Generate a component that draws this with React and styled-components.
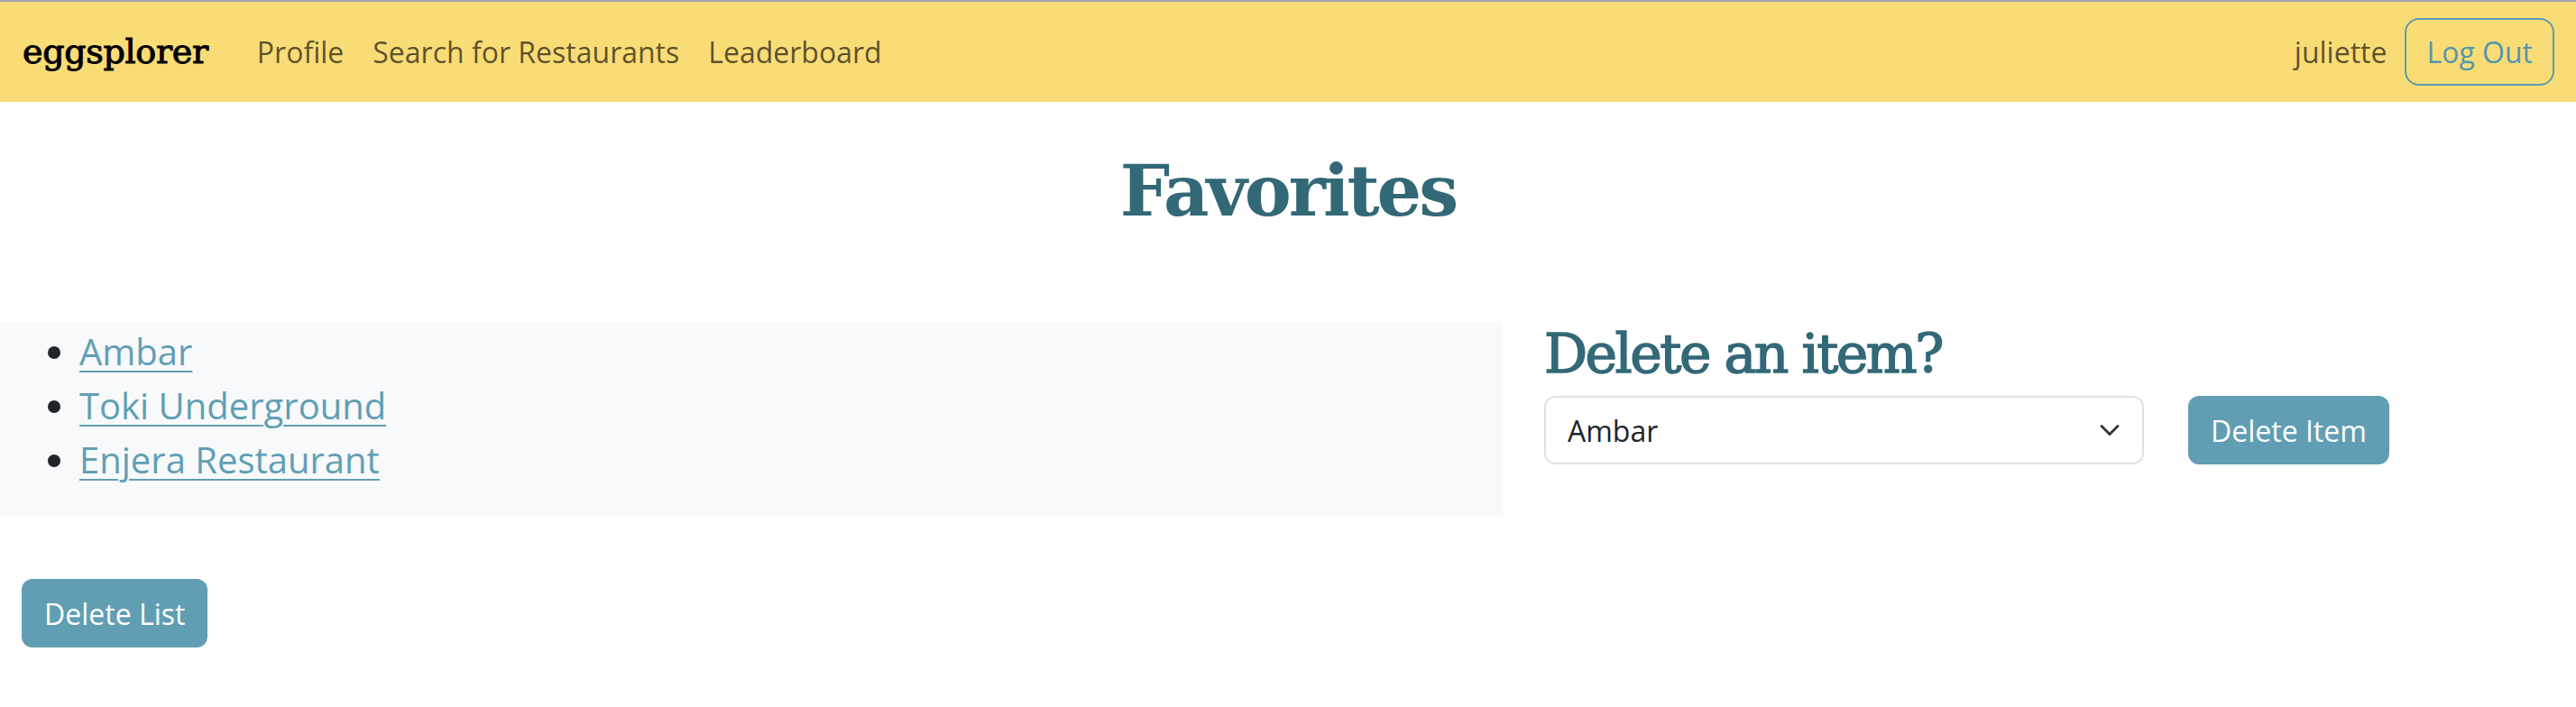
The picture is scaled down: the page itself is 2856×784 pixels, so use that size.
import React, { useState } from 'react';
import styled, { createGlobalStyle } from 'styled-components';

const GlobalStyle = createGlobalStyle`
  html, body {
    margin: 0;
    padding: 0;
    background: #ffffff;
  }
  body {
    font-family: 'Open Sans', 'Noto Sans', sans-serif;
    font-size: 32px;
    line-height: 1.5;
    color: #212529;
  }
  * {
    box-sizing: border-box;
  }
`;

const favorites = ['Ambar', 'Toki Underground', 'Enjera Restaurant'];

export default function App() {
  const [selected, setSelected] = useState(favorites[0]);

  return (
    <>
      <GlobalStyle />
      <NavBar>
        <Brand href="#">eggsplorer</Brand>
        <NavLinks>
          <NavLink href="#">Profile</NavLink>
          <NavLink href="#">Search for Restaurants</NavLink>
          <NavLink href="#">Leaderboard</NavLink>
        </NavLinks>
        <UserArea>
          <UserName>juliette</UserName>
          <OutlineButton>Log Out</OutlineButton>
        </UserArea>
      </NavBar>

      <Main>
        <PageTitle>Favorites</PageTitle>
        <Row>
          <ListPanel>
            <FavList>
              {favorites.map((name) => (
                <li key={name}>
                  <FavLink href="#">{name}</FavLink>
                </li>
              ))}
            </FavList>
          </ListPanel>
          <DeletePanel>
            <SubTitle>Delete an item?</SubTitle>
            <DeleteForm onSubmit={(e) => e.preventDefault()}>
              <SelectWrap>
                <Select value={selected} onChange={(e) => setSelected(e.target.value)}>
                  {favorites.map((name) => (
                    <option key={name} value={name}>{name}</option>
                  ))}
                </Select>
                <Chevron viewBox="0 0 16 16" aria-hidden="true">
                  <path d="m2 5 6 6 6-6" fill="none" stroke="#343a40" strokeWidth="2" strokeLinecap="round" strokeLinejoin="round" />
                </Chevron>
              </SelectWrap>
              <SolidButton type="submit">Delete Item</SolidButton>
            </DeleteForm>
          </DeletePanel>
        </Row>
        <Footer>
          <SolidButton>Delete List</SolidButton>
        </Footer>
      </Main>
    </>
  );
}

const NavBar = styled.nav`
  display: flex;
  align-items: center;
  height: 113px;
  padding: 0 24px 0 25px;
  background: #f9dc76;
  border-top: 2px solid #a4a1b4;
`

const Brand = styled.a`
  font-family: 'DejaVu Serif', serif;
  font-size: 38px;
  letter-spacing: -0.3px;
  -webkit-text-stroke: 1px #000000;
  color: #000000;
  text-decoration: none;
  margin-right: 38px;
`

const NavLinks = styled.div`
  display: flex;
  align-items: center;
`

const NavLink = styled.a`
  padding: 0 16px;
  font-size: 32px;
  color: rgba(0, 0, 0, 0.65);
  text-decoration: none;
`

const UserArea = styled.div`
  margin-left: auto;
  display: flex;
  align-items: center;
  gap: 20px;
`

const UserName = styled.span`
  font-size: 32px;
  color: rgba(0, 0, 0, 0.65);
`

const OutlineButton = styled.button`
  height: 75px;
  padding: 0 22px;
  font-family: 'Open Sans', sans-serif;
  font-size: 32px;
  color: #5596ac;
  background: transparent;
  border: 2px solid #5b9bb0;
  border-radius: 16px;
  cursor: pointer;
`

const Main = styled.main`
  padding-top: 51px;
`

const PageTitle = styled.h1`
  margin: 0 0 98px;
  text-align: center;
  font-family: 'DejaVu Serif', serif;
  font-weight: 700;
  font-size: 78px;
  line-height: 96px;
  letter-spacing: -3px;
  color: #336877;
`

const Row = styled.div`
  display: flex;
`

const ListPanel = styled.div`
  width: 1666px;
  padding: 2px 24px 0;
  background: #f8f9fa;
`

const FavList = styled.ul`
  margin: 0 0 32px;
  padding-left: 64px;
  font-size: 40px;
  line-height: 60px;
  li::marker {
    color: #212529;
  }
`

const FavLink = styled.a`
  color: #619fb4;
  text-decoration: underline;
  text-underline-offset: 6px;
  text-decoration-thickness: 2px;
`

const DeletePanel = styled.div`
  flex: 1;
  padding-left: 46px;
`

const SubTitle = styled.h2`
  margin: -4px 0 8px;
  font-family: 'DejaVu Serif', serif;
  font-weight: 400;
  font-size: 60px;
  line-height: 77px;
  letter-spacing: -2.5px;
  -webkit-text-stroke: 1.5px #336877;
  color: #336877;
`

const DeleteForm = styled.form`
  display: flex;
  align-items: center;
  gap: 49px;
`

const SelectWrap = styled.div`
  position: relative;
  width: 665px;
`

const Select = styled.select`
  appearance: none;
  width: 100%;
  height: 76px;
  padding: 0 72px 0 24px;
  font-family: 'Open Sans', sans-serif;
  font-size: 32px;
  color: #212529;
  background: #ffffff;
  border: 2px solid #dee2e6;
  border-radius: 12px;
`

const Chevron = styled.svg`
  position: absolute;
  right: 26px;
  top: 50%;
  width: 24px;
  height: 24px;
  transform: translateY(-50%);
  pointer-events: none;
`

const SolidButton = styled.button`
  height: 76px;
  padding: 0 25px;
  font-family: 'Open Sans', sans-serif;
  font-size: 32px;
  color: #ffffff;
  background: #619eb3;
  border: none;
  border-radius: 12px;
  cursor: pointer;
`

const Footer = styled.div`
  padding: 70px 24px 0;
`
